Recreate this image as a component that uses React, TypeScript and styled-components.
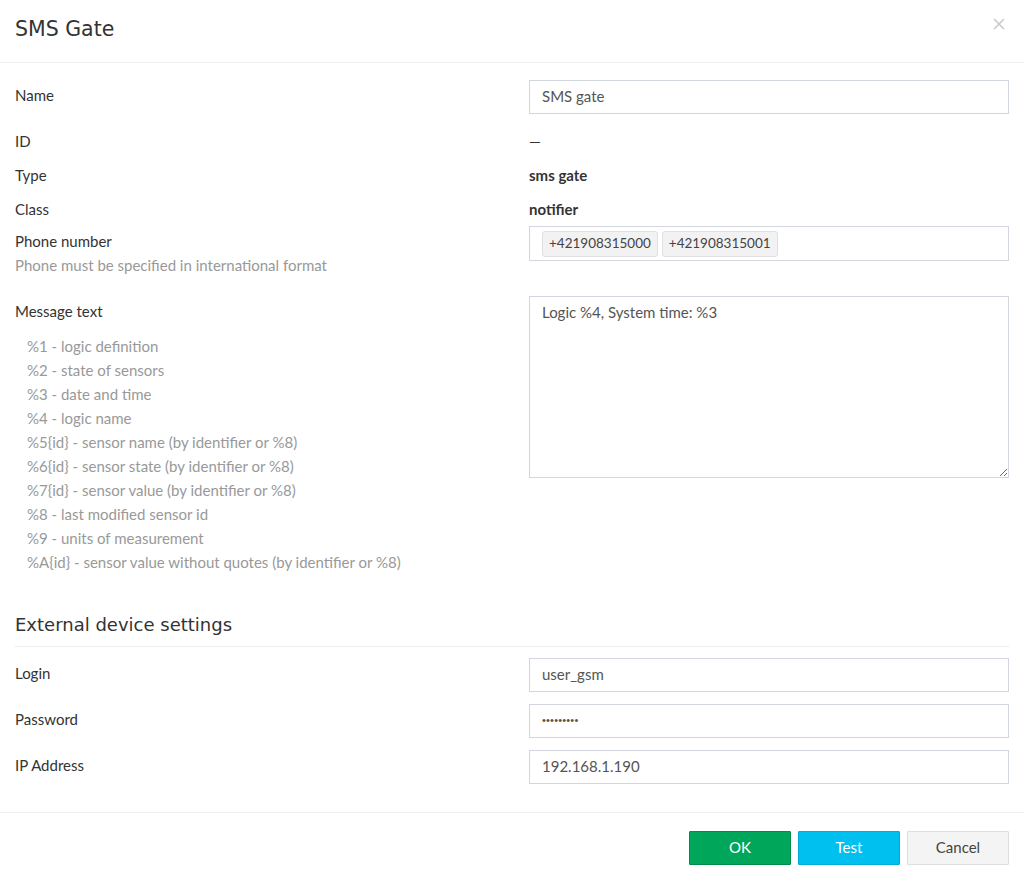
import styled, { createGlobalStyle } from "styled-components";

const GlobalStyle = createGlobalStyle`
  html, body {
    margin: 0;
    padding: 0;
    background: #fff;
  }
  body {
    font-family: Lato, "Liberation Sans", sans-serif;
    font-size: 15px;
    color: #333;
  }
  * {
    box-sizing: border-box;
  }
`;

const Modal = styled.div`
  width: 1024px;
  min-height: 879px;
  background: #fff;
  display: flex;
  flex-direction: column;
`;

const Header = styled.div`
  height: 63px;
  padding: 0 15px 4px;
  display: flex;
  align-items: center;
  justify-content: space-between;
  border-bottom: 1px solid #f0f0f0;
`;

const Title = styled.h4`
  margin: 0;
  font-family: "DejaVu Sans", sans-serif;
  font-weight: 400;
  font-size: 20.5px;
  color: #333;
`;

const Close = styled.button`
  border: 0;
  background: none;
  padding: 0;
  margin-right: 2px;
  margin-bottom: 10px;
  width: 16px;
  height: 16px;
  cursor: pointer;
  display: flex;
  align-items: center;
  justify-content: center;
`;

const Body = styled.div`
  padding: 17px 15px 27px;
`;

const Row = styled.div<{ $mb?: number }>`
  display: grid;
  grid-template-columns: 1fr 480px;
  min-height: 34px;
  margin-bottom: ${(p) => p.$mb ?? 0}px;
`;

const LabelCol = styled.div`
  padding-top: 6px;
`;

const Label = styled.div`
  line-height: 18px;
  color: #333;
`;

const Hint = styled.div`
  line-height: 18px;
  color: #999;
  margin-top: 6px;
`;

const VarList = styled.ul`
  list-style: none;
  margin: 14px 0 0;
  padding: 0 0 0 12px;
`;

const VarItem = styled.li`
  line-height: 24px;
  color: #999;
`;

const Static = styled.div<{ $bold?: boolean }>`
  display: flex;
  align-items: center;
  padding-bottom: 1px;
  font-weight: ${(p) => (p.$bold ? 700 : 400)};
  color: #333;
`;

const Input = styled.input`
  width: 100%;
  height: 34px;
  border: 1px solid #d2d6de;
  border-radius: 0;
  padding: 4px 12px 7px;
  font: inherit;
  color: #555;
  outline: none;
`;

const PasswordInput = styled(Input)`
  font-family: "Liberation Sans", sans-serif;
  font-size: 11px;
  letter-spacing: 0.2px;
`;

const TextArea = styled.textarea`
  width: 100%;
  height: 182px;
  border: 1px solid #d2d6de;
  border-radius: 0;
  padding: 5px 12px;
  font: inherit;
  line-height: 20px;
  color: #555;
  outline: none;
  resize: vertical;
`;

const TagBox = styled.div`
  height: 35px;
  border: 1px solid #d2d6de;
  padding: 3px 12px;
  display: flex;
  align-items: center;
  gap: 4px;
`;

const Tag = styled.span`
  height: 26px;
  display: inline-flex;
  align-items: center;
  padding: 0 6px 1px;
  background: #f2f2f2;
  border: 1px solid #e0e0e0;
  border-radius: 3px;
  font-size: 13.5px;
  color: #444;
`;

const Section = styled.h4`
  margin: 39px 0 11px;
  padding-bottom: 9px;
  border-bottom: 1px solid #eee;
  font-family: "DejaVu Sans", sans-serif;
  font-weight: 400;
  font-size: 18px;
  line-height: 24px;
  color: #333;
`;

const Footer = styled.div`
  margin-top: auto;
  border-top: 1px solid #f0f0f0;
  padding: 18px 15px 14px;
  display: flex;
  justify-content: flex-end;
  gap: 7px;
`;

const Button = styled.button<{ $variant: "ok" | "test" | "cancel" }>`
  width: 102px;
  height: 34px;
  padding: 0 0 2px;
  border: 1px solid
    ${(p) =>
      p.$variant === "ok" ? "#008d4c" : p.$variant === "test" ? "#00acd6" : "#ddd"};
  border-radius: 1px;
  background: ${(p) =>
    p.$variant === "ok" ? "#00a65a" : p.$variant === "test" ? "#00c0ef" : "#f4f4f4"};
  color: ${(p) => (p.$variant === "cancel" ? "#444" : "#fff")};
  font-family: Lato, "Liberation Sans", sans-serif;
  font-size: 15px;
  cursor: pointer;
`;

const variables = [
  "%1 - logic definition",
  "%2 - state of sensors",
  "%3 - date and time",
  "%4 - logic name",
  "%5{id} - sensor name (by identifier or %8)",
  "%6{id} - sensor state (by identifier or %8)",
  "%7{id} - sensor value (by identifier or %8)",
  "%8 - last modified sensor id",
  "%9 - units of measurement",
  "%A{id} - sensor value without quotes (by identifier or %8)",
];

export default function App() {
  return (
    <>
      <GlobalStyle />
      <Modal>
        <Header>
          <Title>SMS Gate</Title>
          <Close aria-label="close">
            <svg width="12" height="12" viewBox="0 0 12 12">
              <path d="M1 1L11 11M11 1L1 11" stroke="#c8c8c8" strokeWidth="1.5" />
            </svg>
          </Close>
        </Header>
        <Body>
          <Row $mb={10}>
            <LabelCol>
              <Label>Name</Label>
            </LabelCol>
            <Input defaultValue="SMS gate" />
          </Row>
          <Row>
            <Static>ID</Static>
            <Static>—</Static>
          </Row>
          <Row>
            <Static>Type</Static>
            <Static $bold>sms gate</Static>
          </Row>
          <Row>
            <Static>Class</Static>
            <Static $bold>notifier</Static>
          </Row>
          <Row $mb={22}>
            <LabelCol>
              <Label>Phone number</Label>
              <Hint>Phone must be specified in international format</Hint>
            </LabelCol>
            <div>
              <TagBox>
                <Tag>+421908315000</Tag>
                <Tag>+421908315001</Tag>
              </TagBox>
            </div>
          </Row>
          <Row>
            <LabelCol>
              <Label>Message text</Label>
              <VarList>
                {variables.map((v) => (
                  <VarItem key={v}>{v}</VarItem>
                ))}
              </VarList>
            </LabelCol>
            <div>
              <TextArea defaultValue="Logic %4, System time: %3" />
            </div>
          </Row>
          <Section>External device settings</Section>
          <Row $mb={12}>
            <LabelCol>
              <Label>Login</Label>
            </LabelCol>
            <Input defaultValue="user_gsm" />
          </Row>
          <Row $mb={12}>
            <LabelCol>
              <Label>Password</Label>
            </LabelCol>
            <PasswordInput type="password" defaultValue="123456789" />
          </Row>
          <Row>
            <LabelCol>
              <Label>IP Address</Label>
            </LabelCol>
            <Input defaultValue="192.168.1.190" />
          </Row>
        </Body>
        <Footer>
          <Button $variant="ok">OK</Button>
          <Button $variant="test">Test</Button>
          <Button $variant="cancel">Cancel</Button>
        </Footer>
      </Modal>
    </>
  );
}
